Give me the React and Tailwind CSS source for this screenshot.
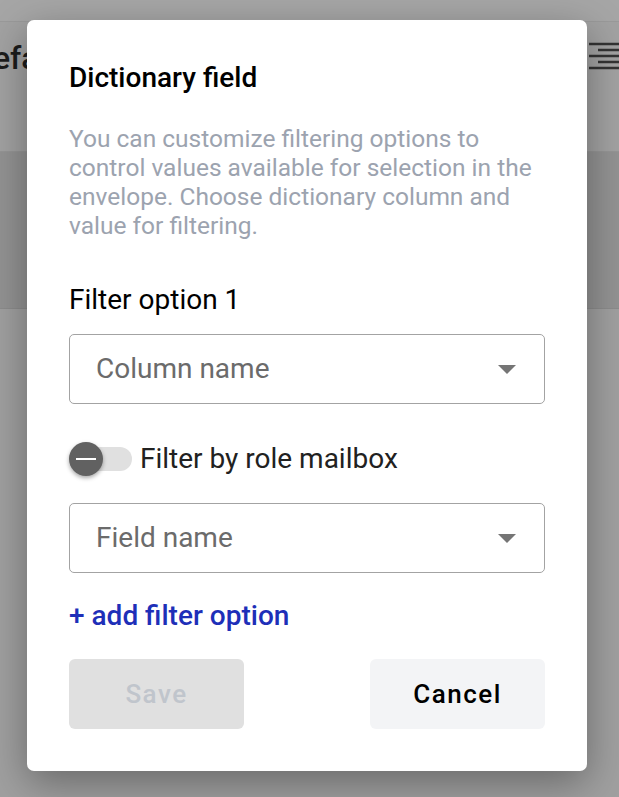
import React from "react";

function Caret() {
  return (
    <svg width="18" height="9" viewBox="0 0 18 9" className="shrink-0">
      <path d="M0 0 L18 0 L9 9 Z" fill="#757575" />
    </svg>
  );
}

function SelectBox({ label }) {
  return (
    <div className="flex h-[70px] w-full items-center justify-between rounded-[5px] border border-[#a3a3a3] bg-white pl-[26px] pr-[28px]">
      <span className="text-[28px] leading-none text-[#6b6b6b]">{label}</span>
      <Caret />
    </div>
  );
}

export default function App() {
  return (
    <div
      className="relative h-[797px] w-full overflow-hidden bg-[#a0a0a0]"
      style={{ fontFamily: "Roboto, 'Liberation Sans', sans-serif" }}
    >
      {/* background page (dimmed) */}
      <div className="flex flex-col">
        <div className="h-[22px] bg-[#a6a6a6] border-b border-[#9a9a9a]" />
        <div className="flex h-[130px] items-start justify-between bg-[#a2a2a2] border-b border-[#969696]">
          <span className="ml-[-28px] mt-[20px] text-[32px] font-medium leading-none text-[#1c1c1c]">
            Default
          </span>
          <svg width="30" height="28" viewBox="0 0 30 28" className="mt-[20px]">
            <g stroke="#333" strokeWidth="2.5">
              <line x1="0" y1="2" x2="30" y2="2" />
              <line x1="9" y1="8" x2="30" y2="8" />
              <line x1="0" y1="14" x2="30" y2="14" />
              <line x1="9" y1="20" x2="30" y2="20" />
              <line x1="0" y1="26" x2="30" y2="26" />
            </g>
          </svg>
        </div>
        <div className="h-[157px] bg-[#939393] border-b border-[#8c8c8c]" />
        <div className="h-[487px] bg-[#a0a0a0]" />
      </div>

      {/* modal */}
      <div className="absolute left-[27px] top-[20px] w-[560px] rounded-[7px] bg-white px-[42px] pt-[42px] pb-[42px] shadow-[0_12px_40px_rgba(0,0,0,0.35)]">
        <h2 className="text-[28px] font-medium leading-[32px] text-black">Dictionary field</h2>
        <p className="mt-[30px] text-[24.5px] leading-[29px] text-[#9ca3af]">
          You can customize filtering options to control values available for selection in the envelope. Choose dictionary column and value for filtering.
        </p>
        <div className="mt-[44px] text-[28px] leading-[32px] text-black">Filter option 1</div>
        <div className="mt-[18px]">
          <SelectBox label="Column name" />
        </div>
        <div className="mt-[38px] flex h-[34px] items-center">
          <div className="relative h-[34px] w-[63px] shrink-0">
            <div className="absolute left-[1px] top-[5px] h-[24px] w-[62px] rounded-full bg-[#e0e0e0]" />
            <div className="absolute left-0 top-0 flex h-[34px] w-[34px] items-center justify-center rounded-full bg-[#616161] shadow-[0_2px_4px_rgba(0,0,0,0.35)]">
              <div className="h-[2px] w-[20px] bg-white" />
            </div>
          </div>
          <span className="ml-[8px] text-[28px] leading-none text-[#212121]">Filter by role mailbox</span>
        </div>
        <div className="mt-[27px]">
          <SelectBox label="Field name" />
        </div>
        <div className="mt-[27px] text-[28px] font-medium leading-[32px] text-[#1e2fb8]">+ add filter option</div>
        <div className="mt-[27px] flex justify-between">
          <button className="h-[70px] w-[175px] rounded-[6px] bg-[#e0e0e0] text-[26px] font-medium tracking-[1.5px] text-[#c0c5cc]">
            Save
          </button>
          <button className="h-[70px] w-[175px] rounded-[6px] bg-[#f3f4f6] text-[26px] font-medium tracking-[1.5px] text-black">
            Cancel
          </button>
        </div>
      </div>
    </div>
  );
}
